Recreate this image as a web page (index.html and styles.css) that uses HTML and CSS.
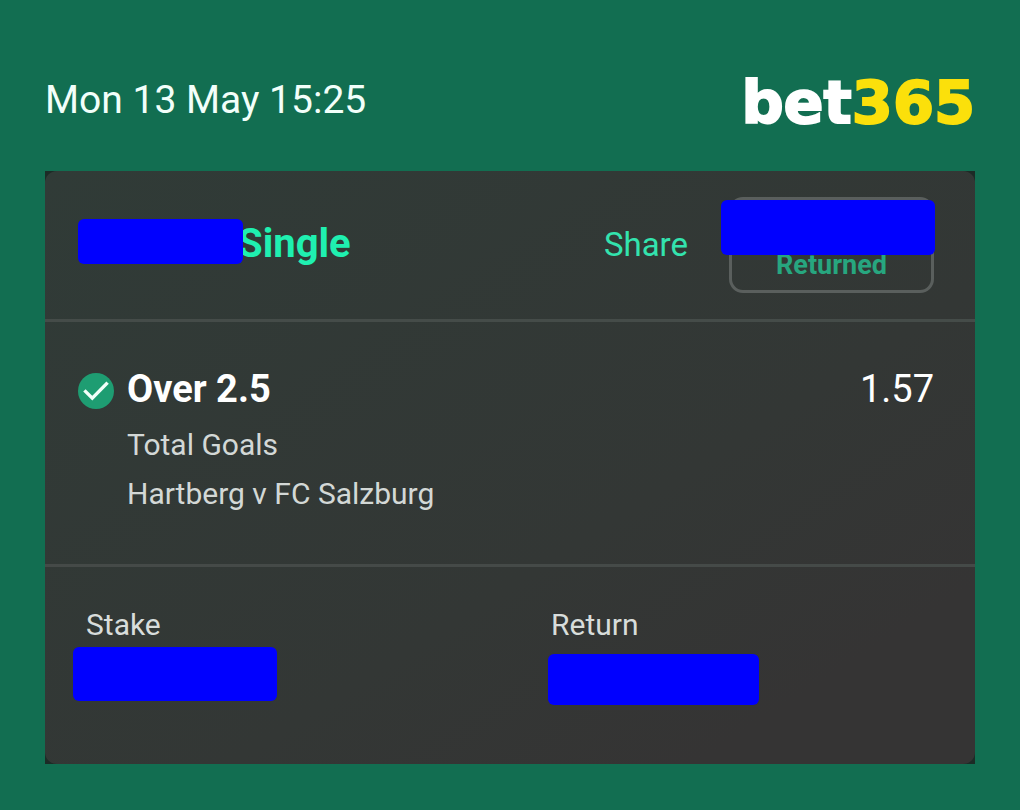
FILE: index.html
```html
<!DOCTYPE html>
<html lang="en">
<head>
<meta charset="utf-8">
<meta name="viewport" content="width=device-width, initial-scale=1">
<title>Bet slip</title>
<link rel="stylesheet" href="styles.css">
</head>
<body>
<header class="top">
  <time class="date" datetime="05-13T15:25">Mon 13 May 15:25</time>
  <div class="logo">bet<span class="logo-num">365</span></div>
</header>
<main class="card-frame">
  <article class="card">
    <div class="card-head">
      <h1 class="bet-type"><span class="mask mask-title"></span>Single</h1>
      <div class="actions">
        <button class="share" type="button">Share</button>
        <button class="returned" type="button">Returned<span class="mask mask-returned"></span></button>
      </div>
    </div>
    <section class="selection">
      <svg class="tick" viewBox="0 0 36 36" aria-hidden="true">
        <circle cx="18" cy="18" r="18" fill="#1e9d72"/>
        <path d="M6.4 17.4 L14.3 25.2 L29.6 9.6" fill="none" stroke="#f2fffa" stroke-width="3.4"/>
      </svg>
      <div class="details">
        <h2 class="pick">Over 2.5</h2>
        <p class="line">Total Goals</p>
        <p class="line">Hartberg v FC Salzburg</p>
      </div>
      <div class="odds">1.57</div>
    </section>
    <section class="amounts">
      <div class="amount">
        <div class="label">Stake</div>
        <div class="mask mask-stake"></div>
      </div>
      <div class="amount">
        <div class="label">Return</div>
        <div class="mask mask-return"></div>
      </div>
    </section>
  </article>
</main>
</body>
</html>
```
FILE: styles.css
```css
* {
  box-sizing: border-box;
}

body {
  margin: 0;
  padding: 0 45px 46px;
  background: #126e51;
  color: #fff;
  font-family: Roboto, "Liberation Sans", sans-serif;
}

h1,
h2,
p {
  margin: 0;
}

button {
  padding: 0;
  background: none;
  border: 0;
  font: inherit;
  cursor: pointer;
}

.top {
  display: flex;
  justify-content: space-between;
  align-items: flex-start;
  padding: 58px 0 23px;
}

.date {
  padding-top: 16px;
  font-size: 39px;
  line-height: 52px;
  color: #f2fffa;
}

.logo {
  font-family: "DejaVu Sans", "Open Sans", sans-serif;
  font-weight: 700;
  font-size: 59px;
  line-height: 90px;
  -webkit-text-stroke: 2px currentColor;
}

.logo-num {
  color: #fbe00b;
}

.card-frame {
  background: #1c2b26;
}

.card {
  border-radius: 12px;
  background: linear-gradient(to bottom right, #303b37, #333735 60%, #353434 85%);
}

.card-head {
  display: flex;
  justify-content: space-between;
  align-items: center;
  padding: 26px 41px 26px 33px;
  border-bottom: 3px solid #454c49;
}

.bet-type {
  position: relative;
  padding: 0 0 2px 160px;
  color: #1ff0b0;
  font-size: 40px;
  line-height: 50px;
}

.actions {
  display: flex;
  align-items: center;
  gap: 41px;
}

.share {
  color: #33e3ae;
  font-size: 33px;
  line-height: 40px;
}

.returned {
  position: relative;
  width: 205px;
  height: 96px;
  padding-top: 40px;
  border: 3px solid #5a5f5d;
  border-radius: 14px;
  color: #27a67f;
  font-size: 27px;
  font-weight: 700;
  line-height: 32px;
}

.mask {
  display: block;
  border-radius: 6px;
  background: #00f;
}

.mask-title {
  position: absolute;
  left: 0;
  top: 0;
  width: 165px;
  height: 45px;
}

.mask-returned {
  position: absolute;
  left: -11px;
  top: 0;
  width: 214px;
  height: 55px;
}

.selection {
  display: flex;
  align-items: flex-start;
  gap: 13px;
  padding: 42px 41px 46px 33px;
  border-bottom: 3px solid #454a48;
}

.tick {
  flex: none;
  width: 36px;
  height: 36px;
  margin-top: 9px;
}

.details {
  flex: 1;
}

.pick {
  margin-bottom: 6px;
  font-size: 38px;
  line-height: 50px;
}

.line {
  color: #d3d8d6;
  font-size: 30px;
  line-height: 49px;
}

.odds {
  font-size: 38px;
  line-height: 50px;
}

.amounts {
  display: grid;
  grid-template-columns: 1fr 1fr;
  padding: 40px 0 59px;
}

.amount {
  padding-left: 41px;
}

.label {
  color: #d8dddb;
  font-size: 30px;
  line-height: 36px;
}

.mask-stake {
  width: 204px;
  height: 54px;
  margin: 4px 0 0 -13px;
}

.mask-return {
  width: 211px;
  height: 51px;
  margin: 11px 0 0 -3px;
}
```
